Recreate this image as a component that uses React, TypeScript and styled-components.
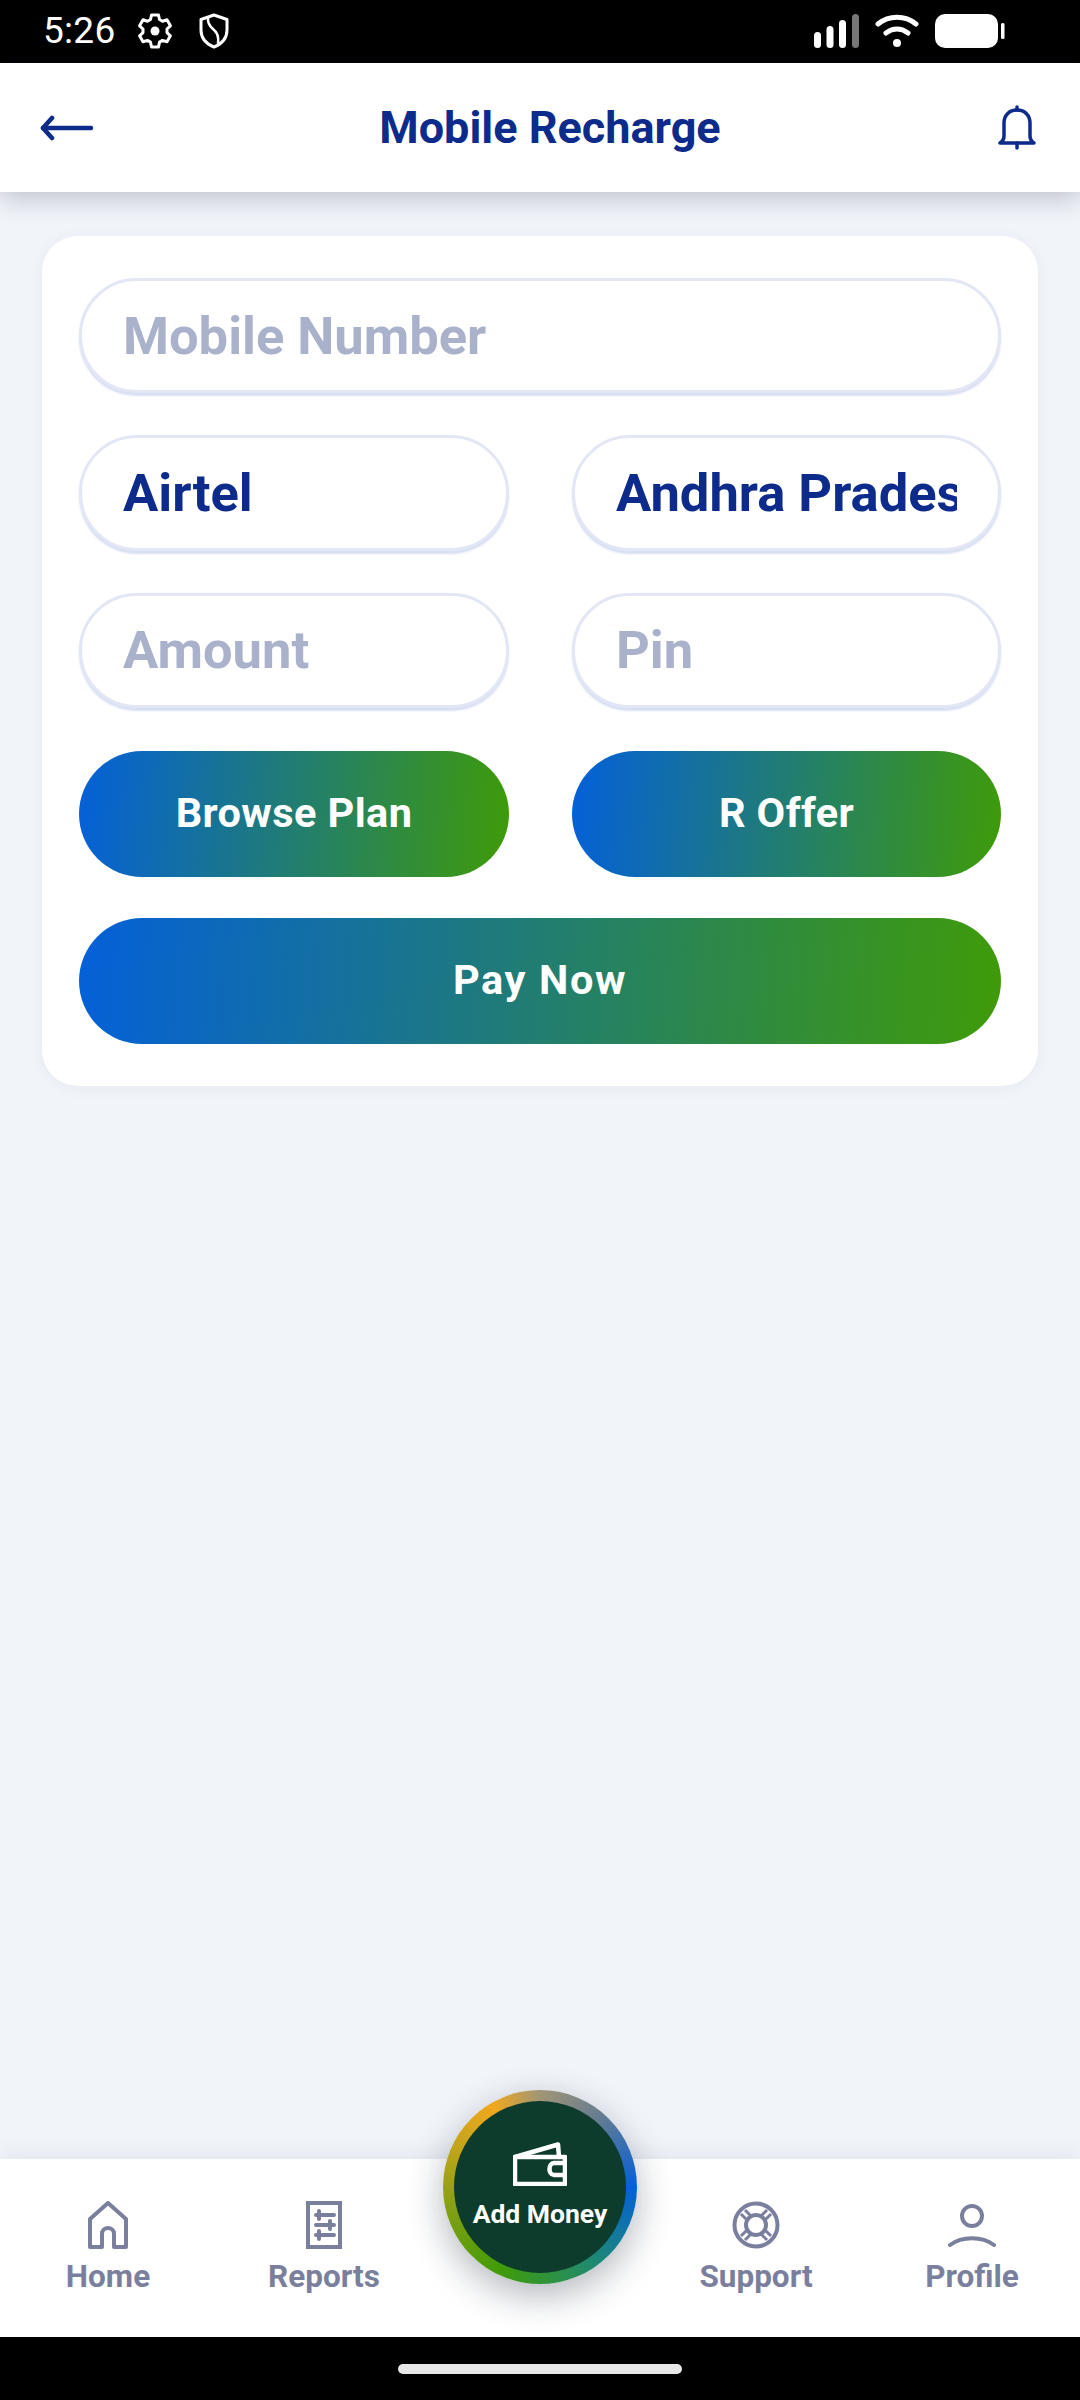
import React from 'react';
import styled, { createGlobalStyle } from 'styled-components';

const GlobalStyle = createGlobalStyle`
  html, body {
    margin: 0;
    padding: 0;
    background: #f1f4f9;
  }
  * {
    box-sizing: border-box;
  }
`;

const navy = '#0d2b8a';
const muted = '#7b7f9e';
const brandGradient = 'linear-gradient(95deg, #0460d9 0%, #3f9b08 100%)';

const Screen = styled.div`
  width: 1080px;
  height: 2400px;
  display: flex;
  flex-direction: column;
  overflow: hidden;
  background: #f1f4f9;
  font-family: Roboto, 'Liberation Sans', sans-serif;
`;

const StatusBar = styled.div`
  height: 63px;
  flex: none;
  background: #000;
  color: #fff;
  display: flex;
  align-items: center;
  padding: 0 75px 2px 43px;
`;

const Clock = styled.span`
  font-size: 37px;
  font-weight: 400;
  letter-spacing: 0.3px;
  margin-right: 22px;
`;

const StatusIcon = styled.svg`
  display: block;
  margin-right: 27px;
`;

const StatusRight = styled.div`
  margin-left: auto;
  display: flex;
  align-items: center;
  gap: 16px;
`;

const Header = styled.header`
  height: 129px;
  flex: none;
  position: relative;
  z-index: 2;
  background: #fff;
  display: flex;
  align-items: center;
  justify-content: space-between;
  padding: 0 44px 0 40px;
  box-shadow: 0 6px 24px rgba(20, 30, 60, 0.24);
`;

const Title = styled.h1`
  margin: 0 0 0 8px;
  font-size: 45px;
  font-weight: 700;
  color: ${navy};
`;

const Main = styled.main`
  flex: 1;
  padding: 44px 42px 0;
`;

const Card = styled.section`
  height: 850px;
  background: #fff;
  border-radius: 36px;
  padding: 42px 37px;
  display: flex;
  flex-direction: column;
  gap: 42px;
  box-shadow: 0 2px 16px rgba(30, 50, 100, 0.05);
`;

const Row = styled.div`
  display: grid;
  grid-template-columns: 430px 429px;
  justify-content: space-between;
`;

const Field = styled.div<{ $filled?: boolean }>`
  height: 115.5px;
  border: 3px solid #e3e7f5;
  border-radius: 58px;
  padding: 0 41px;
  display: flex;
  align-items: center;
  background: #fff;
  box-shadow: 0 3px 2px rgba(190, 202, 235, 0.6);
  font-size: 52.5px;
  font-weight: 700;
  color: ${props => (props.$filled ? navy : '#a9b1cb')};
`;

const FieldText = styled.span`
  display: block;
  overflow: hidden;
  white-space: nowrap;
`;

const ButtonRow = styled(Row)`
  margin-top: 0.5px;
`;

const GradientButton = styled.button<{ $wide?: boolean }>`
  height: ${props => (props.$wide ? '127px' : '126px')};
  margin-top: ${props => (props.$wide ? '-1px' : '0')};
  width: 100%;
  border: 0;
  border-radius: 64px;
  padding: 0 0 2px;
  background: ${brandGradient};
  color: #fff;
  font-family: inherit;
  font-weight: 700;
  font-size: 41.5px;
  letter-spacing: ${props => (props.$wide ? '1.6px' : '0.4px')};
`;

const BottomNav = styled.nav`
  height: 178px;
  flex: none;
  position: relative;
  background: #fff;
  display: grid;
  grid-template-columns: repeat(5, 216px);
  box-shadow: 0 -6px 20px rgba(20, 30, 60, 0.06);
`;

const NavItem = styled.div`
  display: flex;
  flex-direction: column;
  align-items: center;
  padding-top: 42px;
  color: ${muted};
  font-size: 31.5px;
  font-weight: 700;
`;

const NavLabel = styled.span`
  margin-top: 9px;
  line-height: 38px;
`;

const NavIcon = styled.svg`
  display: block;
`;

const FabRing = styled.div`
  position: absolute;
  left: 443px;
  top: -69px;
  width: 194px;
  height: 194px;
  border-radius: 50%;
  padding: 11px;
  background: conic-gradient(from 0deg, #a09676 0deg, #667c90 40deg, #0460d9 90deg, #1f8a70 145deg, #3f9b08 205deg, #7a9f12 250deg, #c9a51c 300deg, #f0a81e 330deg, #a09676 360deg);
  box-shadow: 0 12px 36px rgba(20, 30, 50, 0.32);
`;

const FabInner = styled.div`
  width: 100%;
  height: 100%;
  border-radius: 50%;
  background: #0d3b2c;
  color: #fff;
  display: flex;
  flex-direction: column;
  align-items: center;
  padding-top: 41px;
`;

const WalletIcon = styled.svg`
  display: block;
  flex: none;
`;

const FabLabel = styled.span`
  font-size: 26.5px;
  font-weight: 700;
  margin-top: 13px;
  line-height: 30px;
  white-space: nowrap;
`;

const SystemBar = styled.div`
  height: 63px;
  flex: none;
  background: #000;
  display: flex;
  justify-content: center;
  padding-top: 27px;
`;

const HomePill = styled.div`
  width: 284px;
  height: 10px;
  border-radius: 5px;
  background: #e8e8e8;
`;

const App: React.FC = () => {
  return (
    <Screen>
      <GlobalStyle />
      <StatusBar>
        <Clock>5:26</Clock>
        <StatusIcon width="34" height="36" viewBox="0 0 34 36" fill="none" stroke="#fff" strokeWidth="3" strokeLinejoin="round">
          <path d="M13.5 2h7l1 4.500 3 1.700 4.500-1.400 3.400 6-3.400 3.200v3.600l3.400 3.200-3.400 6-4.500-1.400-3 1.700-1 4.900h-7l-1-4.900-3-1.700-4.500 1.400-3.400-6 3.400-3.200v-3.600l-3.400-3.200 3.400-6 4.500 1.400 3-1.700z" />
          <circle cx="17" cy="18" r="4.500" fill="#fff" stroke="none" />
        </StatusIcon>
        <StatusIcon width="30" height="36" viewBox="0 0 30 36" fill="none" stroke="#fff" strokeWidth="3" strokeLinejoin="round">
          <path d="M15 2 28 6.500V17c0 8-5.500 14-13 17C7.500 31 2 25 2 17V6.500z" />
          <path d="M9 5c-.5 5 1.500 8 5 11s6 6 5 15" strokeWidth="2.500" />
        </StatusIcon>
        <StatusRight>
          <svg width="45" height="34" viewBox="0 0 45 34">
            <rect x="0" y="18" width="7" height="16" rx="3.500" fill="#fff" />
            <rect x="12.500" y="12" width="7" height="22" rx="3.500" fill="#fff" />
            <rect x="25" y="6" width="7" height="28" rx="3.500" fill="#fff" />
            <rect x="38" y="0" width="7" height="34" rx="3.500" fill="#777" />
          </svg>
          <svg width="44" height="34" viewBox="0 0 44 34" fill="none" stroke="#fff" strokeWidth="5" strokeLinecap="round">
            <path d="M3 10C14 1 30 1 41 10" />
            <path d="M11 19c7-5 15-5 22 0" />
            <circle cx="22" cy="29" r="4" fill="#fff" stroke="none" />
          </svg>
          <svg width="70" height="36" viewBox="0 0 70 36">
            <rect x="0" y="1" width="63" height="34" rx="10" fill="#fff" />
            <rect x="66" y="10" width="3.500" height="16" rx="1.500" fill="#fff" />
          </svg>
        </StatusRight>
      </StatusBar>

      <Header>
        <svg width="54" height="26" viewBox="0 0 54 26" fill="none" stroke={navy} strokeWidth="4.500" strokeLinecap="round" strokeLinejoin="round">
          <path d="M3 13h48" />
          <path d="M12 3 3 13l9 10" />
        </svg>
        <Title>Mobile Recharge</Title>
        <svg width="38" height="46" viewBox="0 0 38 46" fill="none" stroke={navy} strokeWidth="3.500" strokeLinejoin="round" strokeLinecap="round">
          <path d="M19 5c-8 0-13 5.500-13 13v13c0 3-1 5-4 7h34c-3-2-4-4-4-7V18c0-7.500-5-13-13-13z" />
          <path d="M19 2v3M19 38v5" />
        </svg>
      </Header>

      <Main>
        <Card>
          <Field><FieldText>Mobile Number</FieldText></Field>
          <Row>
            <Field $filled><FieldText>Airtel</FieldText></Field>
            <Field $filled><FieldText>Andhra Pradesh</FieldText></Field>
          </Row>
          <Row>
            <Field><FieldText>Amount</FieldText></Field>
            <Field><FieldText>Pin</FieldText></Field>
          </Row>
          <ButtonRow>
            <GradientButton>Browse Plan</GradientButton>
            <GradientButton>R Offer</GradientButton>
          </ButtonRow>
          <GradientButton $wide>Pay Now</GradientButton>
        </Card>
      </Main>

      <BottomNav>
        <NavItem>
          <NavIcon width="40" height="48" viewBox="0 0 40 48" fill="none" stroke={muted} strokeWidth="4" strokeLinejoin="round">
            <path d="M20 2 2 18v28h12V33c0-8 12-8 12 0v13h12V18z" />
          </NavIcon>
          <NavLabel>Home</NavLabel>
        </NavItem>
        <NavItem>
          <NavIcon width="36" height="48" viewBox="0 0 36 48" fill="none" stroke={muted} strokeWidth="4" strokeLinecap="round">
            <rect x="2" y="2" width="32" height="44" />
            <path d="M10 14h18M13 10v8M10 24h18M24 20v8M10 34h18M13 30v8" />
          </NavIcon>
          <NavLabel>Reports</NavLabel>
        </NavItem>
        <div />
        <NavItem>
          <NavIcon width="48" height="48" viewBox="0 0 48 48" fill="none" stroke={muted} strokeWidth="4">
            <circle cx="24" cy="24" r="21.500" />
            <circle cx="24" cy="24" r="10" />
            <path d="M9 13l7 7M39 13l-7 7M9 35l7-7M39 35l-7-7M13 9l7 7M35 9l-7 7M13 39l7-7M35 39l-7-7" strokeWidth="3" />
          </NavIcon>
          <NavLabel>Support</NavLabel>
        </NavItem>
        <NavItem>
          <NavIcon width="48" height="48" viewBox="0 0 48 48" fill="none" stroke={muted} strokeWidth="4" strokeLinecap="round">
            <circle cx="24" cy="15" r="10" />
            <path d="M2 44c12-9 32-9 44 0" />
          </NavIcon>
          <NavLabel>Profile</NavLabel>
        </NavItem>
        <FabRing>
          <FabInner>
            <WalletIcon width="54" height="44" viewBox="0 0 54 44" fill="none" stroke="#fff" strokeWidth="4.500" strokeLinejoin="round" strokeLinecap="round">
              <path d="M2 15 45 2.500l1 12.500" />
              <path d="M2 15h50v27H2z" />
              <path d="M52 21H41c-6 0-6 12 0 12h11" />
            </WalletIcon>
            <FabLabel>Add Money</FabLabel>
          </FabInner>
        </FabRing>
      </BottomNav>

      <SystemBar>
        <HomePill />
      </SystemBar>
    </Screen>
  );
};

export default App;
